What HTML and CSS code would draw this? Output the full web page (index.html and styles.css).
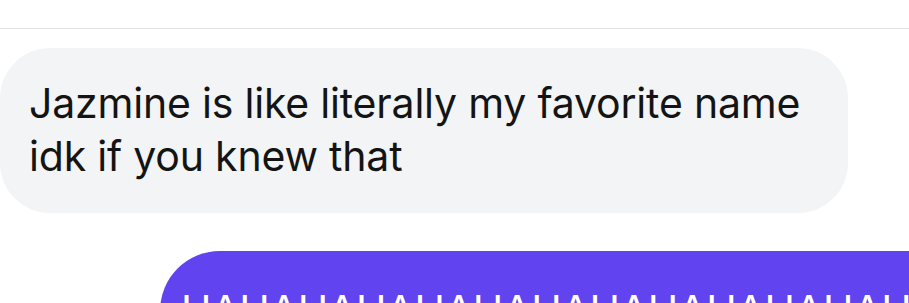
FILE: index.html
```html
<!DOCTYPE html>
<html lang="en">
<head>
    <meta charset="UTF-8">
    <meta name="viewport" content="width=device-width, initial-scale=1.0">
    <title>Messages</title>
    <link rel="stylesheet" href="styles.css">
</head>
<body>
    <div class="thread">
        <div class="divider"></div>
        <div class="row incoming">
            <div class="bubble gray">Jazmine is like literally my favorite name<br>idk if you knew that</div>
        </div>
        <div class="row outgoing">
            <div class="bubble purple">HAHAHAHAHAHAHAHAHAHAHAHAHAHAHAHAHAHUHAHAHA</div>
        </div>
    </div>
</body>
</html>
```

FILE: styles.css
```css
body {
    margin: 0;
    background: #ffffff;
    font-family: Inter, "Liberation Sans", sans-serif;
    overflow: hidden;
}
.thread {
    width: 909px;
    height: 303px;
    overflow: hidden;
    padding-top: 28px;
    box-sizing: border-box;
}
.divider {
    height: 1px;
    background: #e4e4e8;
}
.row {
    display: flex;
}
.incoming {
    margin-top: 19px;
}
.outgoing {
    margin-top: 38px;
    padding-left: 160px;
}
.bubble {
    font-size: 41px;
    line-height: 53px;
    letter-spacing: -0.2px;
    white-space: nowrap;
}
.gray {
    width: 848px;
    box-sizing: border-box;
    background: #f3f4f6;
    color: #141414;
    border-radius: 50px;
    padding: 29px 20px 30px 29px;
}
.purple {
    background: #6243f0;
    color: #ffffff;
    border-radius: 60px 0 0 0;
    padding: 33px 0 0 21px;
    height: 120px;
    flex: 1;
}
```
